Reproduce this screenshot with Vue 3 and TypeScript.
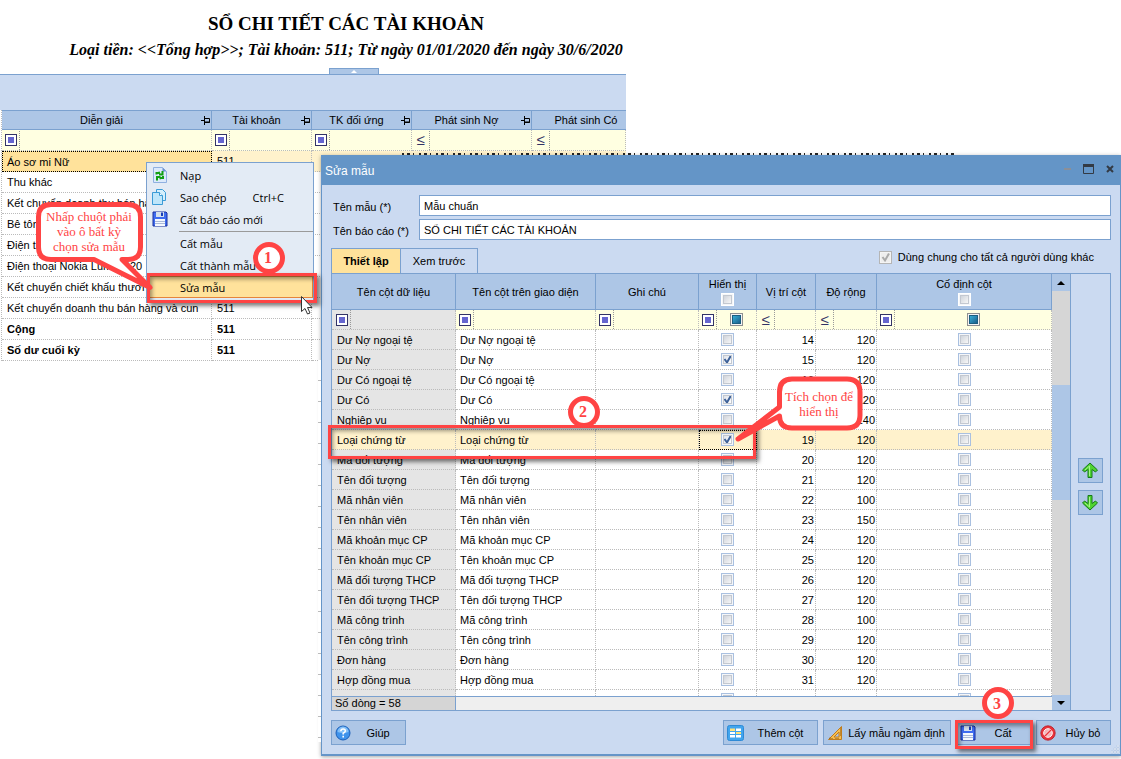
<script setup lang="ts">
import { ref } from 'vue'

interface LedgerRow {
  name: string
  account: string
  bold?: boolean
}

interface ColumnRow {
  name: string
  visible: boolean
  position: number
  width: number
}

const ledgerRows: LedgerRow[] = [
  { name: 'Áo sơ mi Nữ', account: '511' },
  { name: 'Thu khác', account: '511' },
  { name: 'Kết chuyển doanh thu bán hàng và cun', account: '511' },
  { name: 'Bê tông tươi', account: '511' },
  { name: 'Điện thoại Nokia', account: '511' },
  { name: 'Điện thoại Nokia Lumia 920', account: '511' },
  { name: 'Kết chuyển chiết khấu thương mại', account: '511' },
  { name: 'Kết chuyển doanh thu bán hàng và cun', account: '511' },
  { name: 'Cộng', account: '511', bold: true },
  { name: 'Số dư cuối kỳ', account: '511', bold: true },
]

const columnRows = ref<ColumnRow[]>([
  { name: 'Dư Nợ ngoại tệ', visible: false, position: 14, width: 120 },
  { name: 'Dư Nợ', visible: true, position: 15, width: 120 },
  { name: 'Dư Có ngoại tệ', visible: false, position: 16, width: 120 },
  { name: 'Dư Có', visible: true, position: 17, width: 120 },
  { name: 'Nghiệp vụ', visible: false, position: 18, width: 140 },
  { name: 'Loại chứng từ', visible: true, position: 19, width: 120 },
  { name: 'Mã đối tượng', visible: false, position: 20, width: 120 },
  { name: 'Tên đối tượng', visible: false, position: 21, width: 120 },
  { name: 'Mã nhân viên', visible: false, position: 22, width: 100 },
  { name: 'Tên nhân viên', visible: false, position: 23, width: 150 },
  { name: 'Mã khoản mục CP', visible: false, position: 24, width: 120 },
  { name: 'Tên khoản mục CP', visible: false, position: 25, width: 120 },
  { name: 'Mã đối tượng THCP', visible: false, position: 26, width: 120 },
  { name: 'Tên đối tượng THCP', visible: false, position: 27, width: 120 },
  { name: 'Mã công trình', visible: false, position: 28, width: 100 },
  { name: 'Tên công trình', visible: false, position: 29, width: 120 },
  { name: 'Đơn hàng', visible: false, position: 30, width: 120 },
  { name: 'Hợp đồng mua', visible: false, position: 31, width: 120 },
])

const selectedPosition = ref(19)
const templateName = ref('Mẫu chuẩn')
const reportName = ref('SỔ CHI TIẾT CÁC TÀI KHOẢN')
</script>

<template>
  <main class="desktop">
    <section class="report">
      <header class="report-head">
        <h1>SỔ CHI TIẾT CÁC TÀI KHOẢN</h1>
        <p>Loại tiền: &lt;&lt;Tổng hợp&gt;&gt;; Tài khoản: 511; Từ ngày 01/01/2020 đến ngày 30/6/2020</p>
      </header>
      <button class="collapse" type="button" aria-label="Thu gọn">
        <svg width="6" height="3" viewBox="0 0 6 3"><path d="M0 3 3 0 6 3Z" fill="#fff" /></svg>
      </button>
      <div class="band"></div>
      <table class="ledger">
        <colgroup>
          <col class="l-name" /><col class="l-acc" /><col class="l-acc" /><col class="l-debit" /><col />
        </colgroup>
        <thead>
          <tr>
            <th v-for="(h, i) in ['Diễn giải', 'Tài khoản', 'TK đối ứng', 'Phát sinh Nợ', 'Phát sinh Có']" :key="h">
              <div class="th-in" :class="{ last: i === 4 }">
                <span>{{ h }}</span>
                <svg v-if="i < 4" class="pin" width="10" height="9" viewBox="0 0 10 9" fill="none" stroke="#000">
                  <path d="M0 4.500H3M3.500 0V9M4 2.500H8.500V6.500H4" /><path d="M4 6H9" />
                </svg>
              </div>
            </th>
          </tr>
          <tr class="filter">
            <td v-for="i in 5" :key="i">
              <div class="filter-in">
                <button v-if="i < 4" type="button" class="op" aria-label="Điều kiện lọc"><i></i></button>
                <button v-else type="button" class="op-le">≤</button>
                <input type="text" aria-label="Giá trị lọc" />
              </div>
            </td>
          </tr>
        </thead>
        <tbody>
          <tr v-for="(row, i) in ledgerRows" :key="i" :class="{ current: i === 0, total: row.bold }">
            <td>{{ row.name }}</td>
            <td>{{ row.account }}</td>
            <td></td>
            <td></td>
            <td></td>
          </tr>
        </tbody>
      </table>
    </section>

    <ul class="menu" role="menu">
      <li>
        <button type="button" role="menuitem">
          <svg width="16" height="16" viewBox="0 0 16 16">
            <path d="M1.500 .5h9l4 4v11h-13z" fill="#dbe9fb" stroke="#8fb0e0" />
            <path d="M10.500 .5v4h4z" fill="#6d92d0" />
            <path d="M4.500 7.500V6H6L8 5.500M10.500 4V7.500H7M11 9V11H9L7.500 11.500M5 13.500V10H8.500" fill="none" stroke="#12a012" stroke-width="2" />
          </svg>
          <span>Nạp</span>
        </button>
      </li>
      <li>
        <button type="button" role="menuitem">
          <svg width="16" height="16" viewBox="0 0 16 16" stroke="#3b9bd6">
            <path d="M4.500 .5h6l3 3v8h-9z" fill="#d4effc" />
            <path d="M.5 3.500h7l3 3v9h-10z" fill="#bfe6fa" />
            <path d="M7.500 3.500v3h3" fill="#fff" />
          </svg>
          <span>Sao chép</span><kbd>Ctrl+C</kbd>
        </button>
      </li>
      <li>
        <button type="button" role="menuitem">
          <svg width="16" height="16" viewBox="0 0 16 16">
            <path d="M1 1H14L15 2V15H1Z" fill="#3f6cf0" stroke="#1a2f9c" />
            <path d="M4 1H12V6H4Z" fill="#d5e0ec" /><path d="M9 1.500H11V5H9Z" fill="#1a3eb8" />
            <path d="M3 8H13V15H3Z" fill="#f4f8ff" /><path d="M3 10.500H13M3 12.500H13" stroke="#aab8d6" />
          </svg>
          <span>Cất báo cáo mới</span>
        </button>
      </li>
      <li class="sep" role="separator"></li>
      <li><button type="button" role="menuitem"><span>Cất mẫu</span></button></li>
      <li><button type="button" role="menuitem"><span>Cất thành mẫu</span></button></li>
      <li><button type="button" role="menuitem" class="active"><span>Sửa mẫu</span></button></li>
    </ul>

    <section class="dialog" role="dialog" aria-labelledby="dialog-title">
      <header class="title-bar">
        <h2 id="dialog-title">Sửa mẫu</h2>
        <button type="button" aria-label="Thu nhỏ">
          <svg width="12" height="10" viewBox="0 0 12 10"><path d="M2 4H9V6H2Z" fill="#8b8f98" /></svg>
        </button>
        <button type="button" aria-label="Phóng to">
          <svg width="12" height="10" viewBox="0 0 12 10"><path d="M.5 1V9.500H10.500V1" fill="none" stroke="#333a44" /><path d="M0 0H11V3H0Z" fill="#333a44" /></svg>
        </button>
        <button type="button" aria-label="Đóng">
          <svg width="12" height="10" viewBox="0 0 12 10"><path d="M3 2 9 8M9 2 3 8" stroke="#333a44" stroke-width="2" /></svg>
        </button>
      </header>

      <div class="body">
        <div class="fields">
          <label for="template-name">Tên mẫu (*)</label>
          <input id="template-name" v-model="templateName" type="text" />
          <label for="report-name">Tên báo cáo (*)</label>
          <input id="report-name" v-model="reportName" type="text" />
        </div>

        <div class="tabs" role="tablist">
          <button type="button" role="tab" class="tab on" aria-selected="true">Thiết lập</button>
          <button type="button" role="tab" class="tab" aria-selected="false">Xem trước</button>
          <label class="shared">
            <input type="checkbox" class="cb cb-off" checked disabled />
            Dùng chung cho tất cả người dùng khác
          </label>
        </div>

        <div class="frame">
          <div class="grid-part">
            <div class="viewport">
              <table class="columns">
                <colgroup>
                  <col class="c-data" /><col class="c-ui" /><col class="c-note" /><col class="c-show" />
                  <col class="c-pos" /><col class="c-width" /><col />
                </colgroup>
                <thead>
                  <tr>
                    <th>Tên cột dữ liệu</th>
                    <th>Tên cột trên giao diện</th>
                    <th>Ghi chú</th>
                    <th class="stack">Hiển thị<input type="checkbox" class="cb cb-head" aria-label="Hiển thị tất cả" /></th>
                    <th>Vị trí cột</th>
                    <th>Độ rộng</th>
                    <th class="stack">Cố định cột<input type="checkbox" class="cb cb-head" aria-label="Cố định tất cả" /></th>
                  </tr>
                  <tr class="filter">
                    <td v-for="i in 7" :key="i">
                      <div class="filter-in">
                        <button v-if="i !== 5 && i !== 6" type="button" class="op" aria-label="Điều kiện lọc"><i></i></button>
                        <button v-else type="button" class="op-le">≤</button>
                        <span v-if="i === 4 || i === 7" class="tri">
                          <input type="checkbox" class="cb cb-mixed" aria-label="Lọc trạng thái" />
                        </span>
                        <input v-else type="text" aria-label="Giá trị lọc" />
                      </div>
                    </td>
                  </tr>
                </thead>
                <tbody>
                  <tr
                    v-for="row in columnRows"
                    :key="row.position"
                    :class="{ picked: row.position === selectedPosition }"
                    @click="selectedPosition = row.position"
                  >
                    <td>{{ row.name }}</td>
                    <td>{{ row.name }}</td>
                    <td></td>
                    <td class="mid"><input v-model="row.visible" type="checkbox" class="cb" :aria-label="'Hiển thị ' + row.name" /></td>
                    <td class="num">{{ row.position }}</td>
                    <td class="num">{{ row.width }}</td>
                    <td class="mid"><input type="checkbox" class="cb" :aria-label="'Cố định ' + row.name" /></td>
                  </tr>
                  <tr>
                    <td></td><td></td><td></td>
                    <td class="mid"><input type="checkbox" class="cb" aria-label="Hiển thị" /></td>
                    <td></td><td></td>
                    <td class="mid"><input type="checkbox" class="cb" aria-label="Cố định" /></td>
                  </tr>
                </tbody>
              </table>
            </div>
            <div class="summary"><span>Số dòng = 58</span></div>
          </div>
          <div class="scroll">
            <button type="button" aria-label="Cuộn lên"><svg width="8" height="4" viewBox="0 0 8 4"><path d="M0 4 4 0 8 4Z" /></svg></button>
            <div class="track"><i class="before"></i><i class="thumb"></i><i class="after"></i></div>
            <button type="button" aria-label="Cuộn xuống"><svg width="8" height="4" viewBox="0 0 8 4"><path d="M0 0 4 4 8 0Z" /></svg></button>
          </div>
          <div class="side">
            <button type="button" aria-label="Chuyển lên">
              <svg width="17" height="17" viewBox="0 0 17 17"><path d="M8 1 15.500 8 13.500 10 10 7.500V15.500H6V7.500L2.500 10 .5 8Z" fill="#4fd331" stroke="#167a18" stroke-linejoin="round" /><path d="M7.500 14V4L3 8" fill="none" stroke="#a5f28a" /></svg>
            </button>
            <button type="button" aria-label="Chuyển xuống">
              <svg width="17" height="17" viewBox="0 0 17 17"><path d="M8 16 15.500 9 13.500 7 10 9.500V1.500H6V9.500L2.500 7 .5 9Z" fill="#4fd331" stroke="#167a18" stroke-linejoin="round" /><path d="M7.500 3V13L3 9" fill="none" stroke="#a5f28a" /></svg>
            </button>
          </div>
        </div>

        <footer class="actions">
          <button type="button" class="btn help">
            <svg width="16" height="16" viewBox="0 0 16 16"><circle cx="8" cy="8" r="7" fill="#3f93ec" stroke="#1c5fb8" /><path d="M2.500 7A5.500 5.500 0 0 1 13.500 7Q8 9 2.500 7Z" fill="#84c0f8" /><path d="M5.800 6.200Q6 4 8.200 4T10.300 6Q10.300 7.200 8.200 8.300V9.600M8.200 10.800V12.400" fill="none" stroke="#fff" stroke-width="1.600" /></svg>
            <span>Giúp</span>
          </button>
          <button type="button" class="btn add">
            <svg width="17" height="16" viewBox="0 0 17 16"><rect x=".5" y=".5" width="16" height="15" rx="2" fill="#41a5ee" stroke="#2f8ad6" /><path d="M3 3.500H8V6H3ZM9 7H14V9H9Z" fill="#ffe27a" /><path d="M9 3.500H14V6H9ZM3 7H8V9H3ZM3 10H8V12.500H3ZM9 10H14V12.500H9Z" fill="#fff" /></svg>
            <span>Thêm cột</span>
          </button>
          <button type="button" class="btn default">
            <svg width="16" height="16" viewBox="0 0 16 16"><path d="M1.500 14.500 14.500 1.500V14.500ZM7 12H12V7Z" fill="#f7bf50" fill-rule="evenodd" stroke="#c07c1c" stroke-linejoin="round" /><path d="M3 14V12.500M5 14V13M9 14V13M11 14V13M14 4H13M14 6H13M14 8H13M14 10H13" stroke="#8a5510" /></svg>
            <span>Lấy mẫu ngầm định</span>
          </button>
          <button type="button" class="btn save">
            <svg width="16" height="16" viewBox="0 0 16 16"><path d="M1 1H14L15 2V15H1Z" fill="#3f6cf0" stroke="#1a2f9c" /><path d="M4 1H12V6H4Z" fill="#d5e0ec" /><path d="M9 1.500H11V5H9Z" fill="#1a3eb8" /><path d="M3 8H13V15H3Z" fill="#f4f8ff" /><path d="M3 10.500H13M3 12.500H13" stroke="#aab8d6" /></svg>
            <span>Cất</span>
          </button>
          <button type="button" class="btn cancel">
            <svg width="16" height="16" viewBox="0 0 16 16"><circle cx="8" cy="8" r="7.200" fill="#e8343c" stroke="#b81822" stroke-width=".8" /><circle cx="8" cy="8" r="4.300" fill="#f3b5b9" stroke="#fff" /><path d="M5 11 11 5" stroke="#e8343c" stroke-width="2.400" /><path d="M4.500 10 10 4.500M6 11.500 11.500 6" stroke="#fff" stroke-width=".8" /></svg>
            <span>Hủy bỏ</span>
          </button>
        </footer>
      </div>
      <svg class="grip" width="9" height="9" viewBox="0 0 9 9" fill="#f4f8fe" stroke="#a9bcd8" stroke-width=".5"><path d="M6 0h2v2h-2zM3 3h2v2h-2zM6 3h2v2h-2zM0 6h2v2h-2zM3 6h2v2h-2zM6 6h2v2h-2z" /></svg>
    </section>

    <div class="mark mark-menu"></div>
    <div class="mark mark-row"></div>
    <div class="mark mark-save"></div>

    <svg class="notes" width="1121" height="759" viewBox="0 0 1121 759">
      <g fill="#fff" stroke="#ff4444" stroke-width="5" stroke-linejoin="round">
        <path d="M51 204.500H128Q140.500 204.500 140.500 217V247Q140.500 259.500 128 259.500H122L150 287.500 94 259.500H51Q38.500 259.500 38.500 247V217Q38.500 204.500 51 204.500Z" />
        <path d="M792 379H847Q860 379 860 392V415Q860 428 847 428H792Q779.500 428 779.500 416L738 439 779.500 407V392Q779.500 379 792 379Z" />
        <circle cx="269" cy="258" r="13.500" />
        <circle cx="584" cy="412" r="13.500" />
        <circle cx="998" cy="703" r="13.500" />
      </g>
      <g class="note-text">
        <text x="89" y="221">Nhấp chuột phải</text>
        <text x="89" y="236">vào ô bất kỳ</text>
        <text x="89" y="251">chọn sửa mẫu</text>
        <text x="819" y="401">Tích chọn để</text>
        <text x="819" y="416">hiển thị</text>
      </g>
      <g class="note-num">
        <text x="268" y="263">1</text>
        <text x="583" y="417">2</text>
        <text x="997" y="709">3</text>
      </g>
      <path d="M301.500 296.500V311.500L305 308.500 307.500 314 310 313 307.500 307.500H312Z" fill="#fff" stroke="#333" />
    </svg>
  </main>
</template>

<style>
body {
  margin: 0;
  background: #fff;
}
</style>

<style scoped>
.desktop {
  position: relative;
  min-height: 759px;
  overflow: hidden;
  font-family: "Liberation Sans", Arial, sans-serif;
  font-size: 11px;
  color: #000;
}
* {
  box-sizing: border-box;
}
button,
input {
  margin: 0;
  padding: 0;
  border: 0;
  background: none;
  font: inherit;
  color: inherit;
  outline: none;
}
table {
  border-collapse: separate;
  border-spacing: 0;
  table-layout: fixed;
  width: 100%;
}
th {
  padding: 0;
  font-weight: normal;
}
td {
  padding: 0;
  overflow: hidden;
  white-space: nowrap;
}
svg {
  display: block;
  flex: none;
}

/* Report */
.report-head {
  width: calc(100% - 429px);
  padding-top: 11px;
  text-align: center;
  font-family: "Liberation Serif", "Times New Roman", serif;
  color: #000;
  white-space: nowrap;
}
.report-head h1 {
  margin: 0;
  font-size: 19px;
  line-height: 26px;
}
.report-head p {
  margin: 0;
  font-size: 16px;
  line-height: 26px;
  font-weight: bold;
  font-style: italic;
}
.collapse {
  display: flex;
  align-items: center;
  justify-content: center;
  width: 50px;
  height: 6px;
  margin: 5px 0 0 329px;
  background: #adc6e6;
  border: 1px solid #7ba1cf;
  border-bottom: 0;
}
.band {
  width: calc(100% - 495px);
  height: 36px;
  background: #cbdaf1;
  border-top: 1px solid #7ba1cf;
}
.ledger {
  width: calc(100% - 496px);
  margin-left: 1px;
  border-left: 1px dotted #bbb;
}
.l-name {
  width: 210px;
}
.l-acc {
  width: 100px;
}
.l-debit {
  width: 120px;
}
.ledger th {
  height: 20px;
  background: #adc6e6;
  border: solid #7ba1cf;
  border-width: 1px 1px 1px 0;
}
.ledger th:last-child {
  border-right: 0;
}
.th-in {
  display: flex;
  align-items: center;
}
.th-in span {
  flex: 1;
  text-align: center;
}
.th-in.last {
  padding-left: 14px;
}
.filter td {
  background: #ffffe1;
}
.ledger td {
  height: 21px;
  border: dotted #bbb;
  border-width: 0 1px 1px 0;
  padding-left: 5px;
}
.ledger .filter td {
  padding-left: 0;
}
.ledger tbody td:nth-child(n + 3) {
  border-right-color: transparent;
}
.ledger .current td {
  background: #fff2cc;
}
.ledger .current td:first-child {
  background: #ffe29b;
  border: 1px dotted #000;
  padding-left: 4px;
}
.ledger .total td {
  font-weight: bold;
}
.filter-in {
  display: flex;
  align-items: center;
  height: 100%;
}
.filter-in input[type='text'] {
  flex: 1;
  min-width: 0;
  height: 19px;
  border-left: 1px dotted #999;
}
.op {
  flex: none;
  width: 12px;
  height: 12px;
  margin: 0 2px 0 3px;
  padding: 2px;
  background: #fff;
  border: 1px solid #333366;
}
.op i {
  display: block;
  height: 6px;
  background: #6666cf;
}
.op-le {
  flex: none;
  width: 17px;
  color: #333366;
  font-size: 15px;
  line-height: 18px;
}

/* Context menu */
.menu {
  position: absolute;
  left: 146px;
  top: 162px;
  width: 168px;
  margin: 0;
  padding: 1px 0 4px;
  list-style: none;
  background: #e3ebf5;
  border: 1px solid #7ba1cf;
  font-family: "Open Sans", "Noto Sans", sans-serif;
}
.menu button {
  display: flex;
  align-items: center;
  width: 100%;
  height: 22px;
  padding-left: 33px;
  white-space: nowrap;
}
.menu button svg {
  margin: 0 12px 0 -28px;
}
.menu kbd {
  margin-left: 26px;
  font: inherit;
}
.menu .sep {
  height: 1px;
  margin: 1px 0 0 32px;
  background: #9a9a9a;
}
.menu .active {
  background: #ffe29b;
  border: 1px solid #e5853c;
  padding-left: 32px;
}

/* Dialog */
.dialog {
  position: absolute;
  left: 321px;
  right: 0;
  top: 155px;
  border: solid #6695c8;
  border-width: 0 1px 2px;
  background: #cbdaf1;
  box-shadow: 0 1px 4px rgba(0, 0, 0, 0.35);
}
/* Edge of the report rows that stays visible along the window */
.dialog::before {
  content: "";
  position: absolute;
  left: -4px;
  top: 205px;
  bottom: 12px;
  width: 3px;
  background: repeating-linear-gradient(#fff 0 20px, #bbb 20px 21px);
}
.dialog::after {
  content: "";
  position: absolute;
  left: 80px;
  top: -2px;
  right: 165px;
  height: 2px;
  background: repeating-linear-gradient(90deg, #222 0 2px, transparent 2px 5px, #222 5px 8px, transparent 8px 11px, #222 11px 12px, transparent 12px 17px);
}
.title-bar {
  display: flex;
  align-items: center;
  height: 30px;
  padding: 0 4px 2px 3px;
  gap: 9px;
  background: #6495c7;
}
.title-bar h2 {
  flex: 1;
  margin: 0;
  padding-top: 4px;
  font-size: 12px;
  font-weight: normal;
  color: #fff;
}
.body {
  padding: 10px 9px 9px;
}
.fields {
  display: grid;
  grid-template-columns: 86px 1fr;
  row-gap: 3px;
  padding-left: 2px;
}
.fields label {
  padding-top: 6px;
}
.fields input {
  height: 21px;
  min-width: 0;
  padding: 0 4px;
  background: #fff;
  border: 1px solid #7ba1cf;
}
.tabs {
  display: flex;
  margin-top: 8px;
}
.tab {
  width: 77px;
  height: 25px;
  border: solid #7ba1cf;
  border-width: 1px 1px 0 0;
}
.tab.on {
  width: 70px;
  background: #ffe29b;
  border-left-width: 1px;
  font-weight: bold;
}
.shared {
  display: flex;
  align-items: center;
  gap: 6px;
  height: 18px;
  margin: 0 17px 0 auto;
}
.frame {
  display: flex;
  border: 1px solid #7ba1cf;
}
.grid-part {
  flex: 1;
  min-width: 0;
}
.viewport {
  height: 422px;
  overflow: hidden;
  background: #fff;
}
.c-data {
  width: 124px;
}
.c-ui {
  width: 140px;
}
.c-note {
  width: 103px;
}
.c-show {
  width: 58px;
}
.c-pos {
  width: 59px;
}
.c-width {
  width: 61px;
}
.columns th {
  height: 36px;
  background: #adc6e6;
  border: solid #7ba1cf;
  border-width: 0 1px 1px 0;
}
.columns .stack {
  line-height: 14px;
}
.stack .cb {
  margin: 2px auto 0;
}
.columns td {
  height: 20px;
  padding-left: 4px;
  border: dotted #bbb;
  border-width: 0 1px 1px 0;
}
.columns td:first-child {
  padding-left: 5px;
}
.columns .filter td {
  padding-left: 0;
}
.columns .filter td:first-child {
  padding-left: 1px;
}
.columns td:first-child,
.columns .filter td:first-child {
  background: #e5e5e5;
}
.columns .picked td,
.columns .picked td:first-child {
  background: #fff2cc;
}
.columns .picked td:nth-child(4) {
  outline: 1px dotted #000;
  outline-offset: -1px;
}
.columns .mid {
  padding: 0;
}
.mid .cb {
  margin: 0 auto;
}
.columns .num {
  padding: 0 1px 0 0;
  text-align: right;
}
.tri {
  flex: 1;
  height: 19px;
  display: flex;
  align-items: center;
  justify-content: center;
  border-left: 1px dotted #999;
}
.cb {
  appearance: none;
  display: block;
  flex: none;
  width: 13px;
  height: 13px;
  border: 1px solid #a9c0e0;
  box-shadow: inset 0 0 0 1px #f4f6f9, inset 0 0 0 2px #c3c8d0;
  background: linear-gradient(135deg, #c4cad4, #f6f6f6 80%);
}
.cb-head {
  border-color: #fff;
}
.cb:checked {
  background:
    url("data:image/svg+xml,%3Csvg xmlns='http://www.w3.org/2000/svg' viewBox='0 0 11 11'%3E%3Cpath d='M2.500 5 5 8.500 9 1.500' fill='none' stroke='%233d6199' stroke-width='2'/%3E%3C/svg%3E"),
    linear-gradient(135deg, #d4dae4, #fff 80%);
}
.cb-off:checked {
  border-color: #b5b5b5;
  box-shadow: inset 0 0 0 1px #f4f4f4;
  background:
    url("data:image/svg+xml,%3Csvg xmlns='http://www.w3.org/2000/svg' viewBox='0 0 11 11'%3E%3Cpath d='M2.500 5 5 8.500 9 1.500' fill='none' stroke='%23aaaaaa' stroke-width='2'/%3E%3C/svg%3E"),
    #eee;
}
.cb-mixed {
  border-color: #8e8f8f;
  box-shadow: inset 0 0 0 1px #f4f4f4, inset 0 0 0 2px #1b5e80;
  background: linear-gradient(135deg, #3fc3e8, #124a78);
}
.summary {
  height: 14px;
  background: #efefef;
  border-top: 1px solid #7ba1cf;
  line-height: 13px;
}
.summary span {
  display: block;
  width: 124px;
  height: 13px;
  padding-left: 3px;
  background: #d5d5d5;
  border-right: 1px solid #7ba1cf;
}
.scroll {
  display: flex;
  flex-direction: column;
  width: 18px;
  background: #d6d6d6;
}
.scroll button {
  display: flex;
  align-items: center;
  justify-content: center;
  height: 17px;
  background: #adc6e6;
}
.scroll button:last-child {
  height: 15px;
}
.track {
  flex: 1;
  display: flex;
  flex-direction: column;
}
.before {
  flex: 94;
}
.thumb {
  flex: 115;
  background: #adc6e6;
}
.after {
  flex: 195;
}
.side {
  width: 40px;
  padding: 184px 0 0 7px;
  border-left: 1px solid #7ba1cf;
}
.side button {
  display: flex;
  padding: 3px;
  width: 25px;
  height: 25px;
  margin-bottom: 7px;
  background: #adc6e6;
  border: 1px solid #7ba1cf;
}
.actions {
  display: flex;
  gap: 5px;
  margin-top: 9px;
}
.btn {
  display: flex;
  align-items: center;
  width: 75px;
  height: 25px;
  padding-left: 3px;
  background: #adc6e6;
  border: 1px solid #7ba1cf;
  white-space: nowrap;
}
.btn span {
  flex: 1;
  text-align: center;
}
.help {
  margin-right: auto;
}
.add {
  width: 95px;
}
.default {
  width: 128px;
}
.grip {
  position: absolute;
  right: 0;
  bottom: 0;
}

/* Guide marks */
.mark {
  position: absolute;
  border: 3px solid #ff4444;
  box-shadow: 3px 3px 4px rgba(0, 0, 0, 0.5), inset 2px 3px 4px rgba(0, 0, 0, 0.4);
  pointer-events: none;
}
.mark-menu {
  left: 147px;
  top: 273px;
  width: 170px;
  height: 30px;
}
.mark-row {
  left: 328px;
  top: 425px;
  width: 428px;
  height: 34px;
}
.mark-save {
  left: 955px;
  top: 720px;
  width: 78px;
  height: 29px;
}
.notes {
  position: absolute;
  left: 0;
  top: 0;
  pointer-events: none;
}
.note-text {
  font: 13px "Liberation Serif", "Times New Roman", serif;
  fill: #ff4444;
  text-anchor: middle;
}
.note-num {
  font: bold 16px "Liberation Serif", "Times New Roman", serif;
  fill: #ff4444;
  text-anchor: middle;
}
</style>
